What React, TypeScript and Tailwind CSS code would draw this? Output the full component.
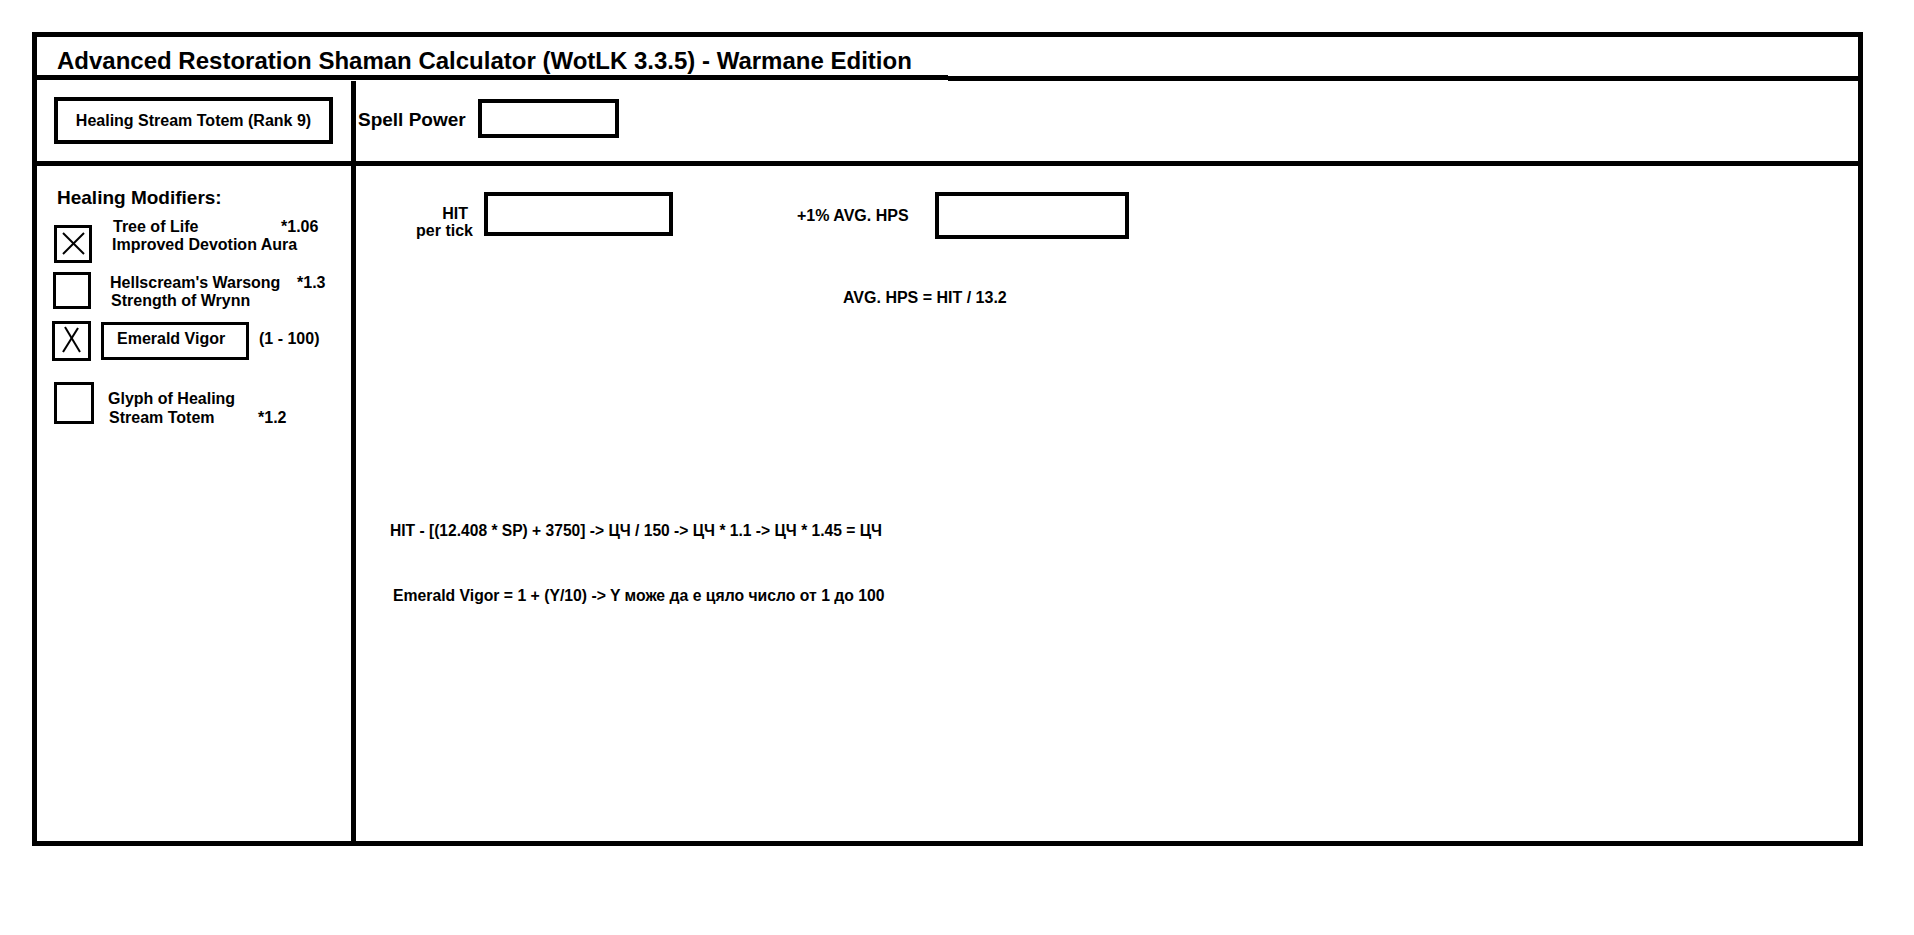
import React from "react";

const font = { fontFamily: "'Liberation Sans', Arial, sans-serif" };

function CheckX({ tilted }: { tilted?: boolean }) {
  if (tilted) {
    return (
      <svg width="33" height="34" viewBox="0 0 33 34" className="block">
        <line x1="10" y1="3" x2="25" y2="28" stroke="black" strokeWidth="2" />
        <line x1="23" y1="4" x2="8" y2="28" stroke="black" strokeWidth="2" />
      </svg>
    );
  }
  return (
    <svg width="32" height="32" viewBox="0 0 32 32" className="block">
      <line x1="6" y1="5" x2="27" y2="26" stroke="black" strokeWidth="2" />
      <line x1="27" y1="5" x2="6" y2="26" stroke="black" strokeWidth="2" />
    </svg>
  );
}

export default function App() {
  return (
    <div
      className="w-[1914px] h-[935px] bg-white pt-[32px] pl-[32px] text-black font-bold"
      style={font}
    >
      <div className="w-[1831px] h-[814px] border-[5px] border-black flex flex-col">
        {/* title */}
        <div className="h-[38px] pl-[20px] pt-[12px] text-[24px] leading-[24px] whitespace-nowrap">
          Advanced Restoration Shaman Calculator (WotLK 3.3.5) - Warmane Edition
        </div>
        <div className="flex h-[6px]">
          <div className="w-[911px] h-[5px] bg-black" />
          <div className="flex-1 h-[5px] mt-[1px] bg-black" />
        </div>

        {/* spell row */}
        <div className="flex h-[80px]">
          <div className="w-[314px] pl-[17px] pt-[16px]">
            <div className="w-[279px] h-[47px] border-[4px] border-black flex items-center justify-center text-[16px] leading-[18px]">
              Healing Stream Totem (Rank 9)
            </div>
          </div>
          <div className="w-[5px] bg-black" />
          <div className="flex-1 flex items-start pl-[2px]">
            <span className="mt-[29px] text-[19px] leading-[19px]">Spell Power</span>
            <div className="ml-[12px] mt-[18px] w-[141px] h-[39px] border-[4px] border-black" />
          </div>
        </div>
        <div className="h-[5px] bg-black" />

        {/* main */}
        <div className="flex flex-1">
          <div className="w-[314px] text-[16px] leading-[18px]">
            <div className="mt-[22px] pl-[20px] text-[19px] leading-[19px]">Healing Modifiers:</div>

            <div className="flex mt-[11px]">
              <div className="ml-[17px] mt-[7px] w-[38px] h-[38px] border-[3px] border-black">
                <CheckX />
              </div>
              <div className="ml-[21px]">
                <div className="flex">
                  <span className="w-[168px]">Tree of Life</span>
                  <span>*1.06</span>
                </div>
                <div className="-ml-[1px]">Improved Devotion Aura</div>
              </div>
            </div>

            <div className="flex mt-[9px]">
              <div className="ml-[16px] w-[38px] h-[37px] border-[3px] border-black" />
              <div className="ml-[19px] mt-[2px]">
                <div className="flex">
                  <span className="w-[187px]">Hellscream's Warsong</span>
                  <span>*1.3</span>
                </div>
                <div className="ml-[1px]">Strength of Wrynn</div>
              </div>
            </div>

            <div className="flex items-start mt-[11px]">
              <div className="ml-[15px] w-[39px] h-[40px] border-[3px] border-black">
                <CheckX tilted />
              </div>
              <div className="ml-[10px] mt-[1px] w-[148px] h-[38px] border-[3px] border-black pl-[13px] pt-[5px]">
                Emerald Vigor
              </div>
              <span className="ml-[10px] mt-[9px]">(1 - 100)</span>
            </div>

            <div className="flex mt-[21px]">
              <div className="ml-[17px] w-[40px] h-[42px] border-[3px] border-black" />
              <div className="ml-[14px] mt-[7px] leading-[19px]">
                <div>Glyph of Healing</div>
                <div className="flex ml-[1px]">
                  <span className="w-[149px]">Stream Totem</span>
                  <span>*1.2</span>
                </div>
              </div>
            </div>
          </div>
          <div className="w-[5px] bg-black" />

          <div className="flex-1 text-[16px] leading-[18px] whitespace-nowrap">
            <div className="flex items-start mt-[26px]">
              <div className="w-[117px] mt-[13px] text-right leading-[17px]">
                <div className="pr-[5px]">HIT</div>
                <div>per tick</div>
              </div>
              <div className="ml-[11px] w-[189px] h-[44px] border-[4px] border-black" />
              <span className="ml-[124px] w-[138px] mt-[15px]">+1% AVG. HPS</span>
              <div className="w-[194px] h-[47px] border-[4px] border-black" />
            </div>

            <div className="mt-[50px] pl-[487px]">AVG. HPS = HIT / 13.2</div>

            <div className="mt-[215px] pl-[34px] text-[15.6px]">
              HIT - [(12.408 * SP) + 3750] -&gt; ЦЧ / 150 -&gt; ЦЧ * 1.1 -&gt; ЦЧ * 1.45 = ЦЧ
            </div>

            <div className="mt-[47px] pl-[37px] text-[15.75px]">
              Emerald Vigor = 1 + (Y/10) -&gt; Y може да е цяло число от 1 до 100
            </div>
          </div>
        </div>
      </div>
    </div>
  );
}
